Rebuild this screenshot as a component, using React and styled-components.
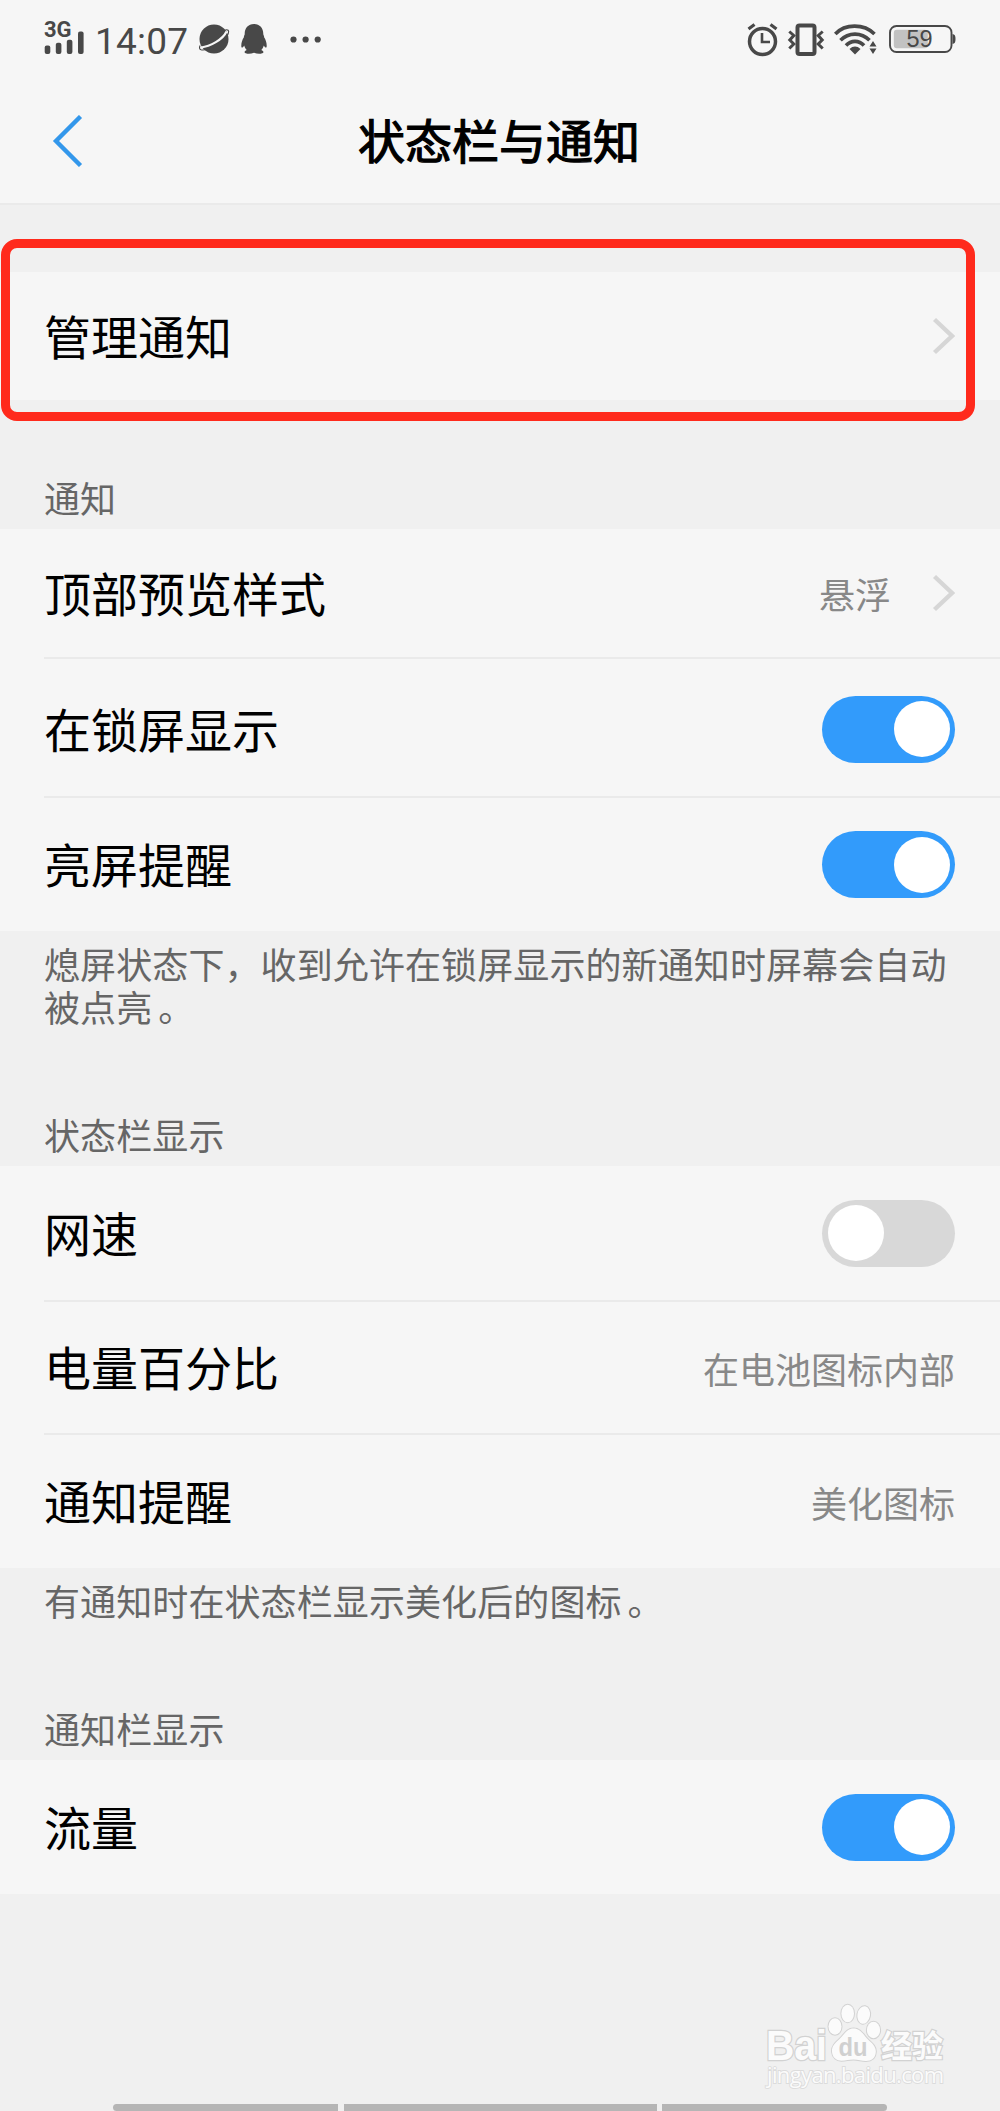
import React, { useState } from 'react';
import styled, { createGlobalStyle, css } from 'styled-components';

const colors = {
  page: '#f0f0f0',
  panel: '#f6f6f6',
  line: '#eaeaea',
  blue: '#329bfb',
  back: '#3397eb',
  off: '#d8d8d8',
  status: '#484848',
  label: '#666666',
  value: '#888888',
  mark: '#ff2a1c',
  nav: '#b5b5b5',
};

const GlobalStyle = createGlobalStyle`
  * {
    box-sizing: border-box;
  }
  body {
    margin: 0;
    background: ${colors.page};
    font-family: 'Noto Sans CJK SC', 'Noto Sans', sans-serif;
  }
`;

const Screen = styled.div`
  position: relative;
  display: flex;
  flex-direction: column;
  width: 1000px;
  height: 2111px;
  overflow: hidden;
  background: ${colors.page};
`;

const Header = styled.header`
  height: 205px;
  background: ${colors.panel};
  border-bottom: 2px solid ${colors.line};
`;

const StatusBar = styled.div`
  display: flex;
  justify-content: space-between;
  height: 78px;
  padding: 0 44px;
`;

const StatusGroup = styled.div`
  display: flex;
  align-items: center;
  height: 78px;
`;

const Network = styled.div`
  display: flex;
  flex-direction: column;
  width: 40px;
  height: 34px;
`;

const NetworkType = styled.span`
  height: 8px;
  font: 700 22px/16px Roboto, sans-serif;
  color: ${colors.status};
`;

const Clock = styled.span`
  width: 103px;
  padding-left: 11px;
  margin-top: 5px;
  font: 400 37px/44px Roboto, sans-serif;
  letter-spacing: 0.2px;
  color: ${colors.status};
`;

const StatusIcon = styled.svg`
  display: block;
  flex: none;
  margin-left: ${({ $gap }) => $gap || 0}px;
  overflow: visible;
`;

const TitleBar = styled.div`
  display: grid;
  grid-template-columns: 120px 1fr 120px;
  align-items: center;
  height: 126px;
`;

const BackButton = styled.button`
  display: flex;
  padding: 0 0 0 52px;
  border: 0;
  background: none;
`;

const Title = styled.h1`
  margin: 0;
  padding: 0 2px 5px 0;
  font-size: 47px;
  font-weight: 400;
  line-height: 60px;
  text-align: center;
  color: #000;
  -webkit-text-stroke: 1.2px #000;
`;

const Panel = styled.section`
  background: ${colors.panel};
`;

const FirstPanel = styled(Panel)`
  margin-top: 67px;
`;

const Row = styled.div`
  display: flex;
  align-items: center;
  height: ${({ $height }) => $height}px;
  margin-left: 44px;
  padding-top: ${({ $shift }) => $shift || 0}px;
  padding-right: 45px;
  ${({ $divided }) => $divided && css`
    border-top: 2px solid ${colors.line};
  `}
`;

const RowLabel = styled.span`
  flex: 1;
  padding-bottom: 3px;
  font-size: 47px;
  line-height: 60px;
  color: #000;
`;

const RowValue = styled.span`
  font-size: 36px;
  line-height: 48px;
  color: ${colors.value};
`;

const Arrow = styled.svg`
  display: block;
  margin-left: 41px;
`;

const Between = styled.div`
  display: flex;
  flex-direction: column;
  height: ${({ $height }) => $height}px;
  padding: 11px 40px 8px 44px;
`;

const Hint = styled.p`
  margin: 0;
  font-size: 36px;
  line-height: 43px;
  letter-spacing: 0.1px;
  color: ${colors.label};
  white-space: pre-line;
`;

const FullStop = styled.span`
  margin-left: 6px;
`;

const GroupLabel = styled.h2`
  margin: auto 0 0;
  font-size: 36px;
  font-weight: 400;
  line-height: 48px;
  letter-spacing: 0.1px;
  color: ${colors.label};
`;

const Switch = styled.button`
  display: flex;
  justify-content: ${({ $on }) => $on ? 'flex-end' : 'flex-start'};
  width: 133px;
  height: 67px;
  padding: 5.5px;
  border: 0;
  border-radius: 34px;
  background: ${({ $on }) => $on ? colors.blue : colors.off};
`;

const Knob = styled.span`
  width: 56px;
  height: 56px;
  border-radius: 50%;
  background: #fff;
`;

const Highlight = styled.div`
  position: absolute;
  top: 239px;
  left: 1px;
  width: 973.5px;
  height: 182px;
  border: 9px solid ${colors.mark};
  border-radius: 16px;
  pointer-events: none;
`;

const Watermark = styled.svg`
  position: absolute;
  right: 49px;
  bottom: 16px;
`;

const NavBar = styled.div`
  display: grid;
  grid-template-columns: 225px 313px 225px;
  gap: 5.5px;
  justify-content: center;
  height: 7px;
  margin-top: auto;
`;

const NavPart = styled.span`
  background: ${colors.nav};
  &:first-child {
    border-radius: 4px 0 0 4px;
  }
  &:last-child {
    border-radius: 0 4px 4px 0;
  }
`;

const groups = [
  {
    label: '通知',
    gap: 129,
    rows: [
      { name: '顶部预览样式', value: '悬浮', arrow: true, height: 128 },
      { name: '在锁屏显示', toggle: true, on: true, height: 139, shift: 3 },
      { name: '亮屏提醒', toggle: true, on: true, height: 135 },
    ],
  },
  {
    hint: '熄屏状态下，收到允许在锁屏显示的新通知时屏幕会自动\n被点亮',
    label: '状态栏显示',
    gap: 235,
    rows: [
      { name: '网速', toggle: true, on: false, height: 134 },
      { name: '电量百分比', value: '在电池图标内部', height: 133 },
      { name: '通知提醒', value: '美化图标', height: 135 },
    ],
  },
  {
    hint: '有通知时在状态栏显示美化后的图标',
    label: '通知栏显示',
    gap: 192,
    rows: [
      { name: '流量', toggle: true, on: true, height: 134 },
    ],
  },
];

const ArrowIcon = () => (
  <Arrow width="23" height="38" viewBox="0 0 23 38" fill="none">
    <path d="M2.5 2.5 20 19 2.5 35.5" stroke="#d6d6d6" strokeWidth="4.4" />
  </Arrow>
);

const Toggle = ({ initial }) => {
  const [on, setOn] = useState(initial);
  return (
    <Switch $on={on} onClick={() => setOn(!on)}>
      <Knob />
    </Switch>
  );
};

const SignalIcon = () => (
  <StatusIcon width="40" height="24" viewBox="0 0 40 24" fill={colors.status}>
    <rect x="0.7" y="15.5" width="5.6" height="8.500" rx="2" />
    <rect x="11.800" y="12.800" width="5.600" height="11.200" rx="2" />
    <rect x="22.800" y="9.800" width="5.600" height="14.200" rx="2" />
    <rect x="34" y="1.500" width="5.600" height="22.500" rx="2" />
  </StatusIcon>
);

const PlanetIcon = () => (
  <StatusIcon $gap={11} width="32" height="32" viewBox="0 0 32 32">
    <circle cx="16" cy="16" r="14.500" fill={colors.status} />
    <path d="M3 24.500C12 23.500 25 16.500 28.500 8.500" fill="none" stroke={colors.panel} strokeWidth="2.200" />
    <path d="M26.500 7.200c3.500-1.200 5 .2 3.700 3.500C27 18.500 9 28.300 3 26.800c-2-.6-1.700-2.600-.9-4.300" fill="none" stroke={colors.status} strokeWidth="1.100" />
  </StatusIcon>
);

const PenguinIcon = () => (
  <StatusIcon $gap={11} width="26" height="30" viewBox="0 0 26 30" fill={colors.status}>
    <path d="M13 0C7 0 3.600 4.300 3.700 10.200c-.2 1-.9 1.500-.8 3C1.300 15.600.200 18.800.300 22c.1 2.300 1.200 2.200 2.900-.6.500 1.700 1.300 3.300 2.500 4.500-1.500.6-2.300 1.400-2.100 2.400.2 1.700 5.800 2.100 9.400.5 3.600 1.600 9.200 1.200 9.400-.5.200-1-.6-1.800-2.100-2.400 1.200-1.200 2-2.800 2.500-4.500 1.700 2.800 2.800 2.900 2.900.6.100-3.200-1-6.400-2.600-8.800.1-1.500-.6-2-.8-3C22.400 4.300 19 0 13 0Z" />
  </StatusIcon>
);

const MoreIcon = () => (
  <StatusIcon $gap={23} width="32" height="8" viewBox="0 0 32 8" fill={colors.status}>
    <circle cx="3.500" cy="4.500" r="3.100" />
    <circle cx="15.600" cy="4.500" r="3.100" />
    <circle cx="27.700" cy="4.500" r="3.100" />
  </StatusIcon>
);

const AlarmIcon = () => (
  <StatusIcon width="31" height="33" viewBox="0 0 31 33" fill="none" stroke={colors.status}>
    <circle cx="15.500" cy="18.500" r="13" strokeWidth="3.500" />
    <path d="M15 10v9h8" strokeWidth="2.600" />
    <path d="m1.500 6 6-4.500M23.500 1.500l6 4.500" strokeWidth="3.200" />
  </StatusIcon>
);

const VibrateIcon = () => (
  <StatusIcon $gap={10} width="36" height="33" viewBox="0 0 36 33" fill="none" stroke={colors.status}>
    <rect x="9.500" y="2.500" width="17" height="28.500" rx="2" strokeWidth="4" />
    <path d="m1.300 8.500 4.500 4-4 4.500 4 4-4.500 4.500M34.700 8.500l-4.500 4 4 4.500-4 4 4.500 4.500" strokeWidth="3" />
  </StatusIcon>
);

const WifiIcon = () => (
  <StatusIcon $gap={10} width="43" height="32" viewBox="0 0 43 32" fill="none" stroke={colors.status}>
    <path d="M1.300 11C11 .500 30 .500 40.500 11" strokeWidth="3.600" />
    <path d="M6.500 17.300c8-8.300 21-8.300 29 0" strokeWidth="3.600" />
    <path d="M12 22.500c5-5.500 13-5.500 18 0" strokeWidth="3.600" />
    <path d="M15.500 26c3.500-3.300 7.500-3.300 11 0L21 31.500Z" fill={colors.status} stroke="none" />
    <path d="m39 18 3.500 5.500h-7ZM39 31l3.500-5.500h-7Z" fill={colors.status} stroke="none" />
  </StatusIcon>
);

const BatteryIcon = () => (
  <StatusIcon $gap={12} width="67" height="28" viewBox="0 0 67 28">
    <rect x="1" y="1" width="61.500" height="26" rx="6.500" fill="none" stroke={colors.status} strokeWidth="1.900" />
    <rect x="4.800" y="4.800" width="34" height="18.400" rx="3" fill="#c2c2c2" />
    <path d="M63.500 9c2.200.3 3 1.600 3 5s-.8 4.700-3 5Z" fill={colors.status} />
    <text x="30.500" y="22.300" fontFamily="'Liberation Sans', sans-serif" fontSize="23.500" textAnchor="middle" fill={colors.status}>59</text>
  </StatusIcon>
);

const BaiduMark = () => (
  <Watermark width="190" height="94" viewBox="0 0 190 94" fill="#fbfbfb" stroke="#d2d2d2" strokeWidth="2.600" paintOrder="stroke">
    <text x="5" y="58.500" fontFamily="'Liberation Sans', sans-serif" fontWeight="700" fontSize="42" textLength="61" lengthAdjust="spacingAndGlyphs">Bai</text>
    <ellipse cx="74" cy="25.500" rx="6.500" ry="8.300" strokeWidth="2" />
    <ellipse cx="86.700" cy="12.500" rx="6.300" ry="8.800" strokeWidth="2" />
    <ellipse cx="102.700" cy="14" rx="6.300" ry="8.800" transform="rotate(10 102.700 14)" strokeWidth="2" />
    <ellipse cx="112.500" cy="29" rx="6.600" ry="8.300" strokeWidth="2" />
    <path d="M92.500 27.500c-7 0-9.500 6.500-14 10.500-4.500 4-8 7.500-7.500 13 .6 6 4.800 8.700 9.500 8.700 4.500 0 7.500-1.200 12-1.200s8 1.500 12.500 1.500c5.500 0 9.500-3 9.800-9 .3-5.500-3.500-8.500-7.800-12.500-4.500-4.300-7-11-14.500-11Z" strokeWidth="2" />
    <text x="77.500" y="55" fontFamily="'Liberation Sans', sans-serif" fontWeight="700" fontSize="25" textLength="29" lengthAdjust="spacingAndGlyphs" fill="#d0d0d0" stroke="none">du</text>
    <text x="120" y="55.500" fontFamily="'Noto Sans CJK SC', sans-serif" fontWeight="700" fontSize="31" strokeWidth="2.400">经验</text>
    <text x="6" y="81.500" fontFamily="'Open Sans', sans-serif" fontSize="22" textLength="177" strokeWidth="1.800" stroke="#dcdcdc">jingyan.baidu.com</text>
  </Watermark>
);

const App = () => (
  <>
    <GlobalStyle />
    <Screen>
      <Header>
        <StatusBar>
          <StatusGroup>
            <Network>
              <NetworkType>3G</NetworkType>
              <SignalIcon />
            </Network>
            <Clock>14:07</Clock>
            <PlanetIcon />
            <PenguinIcon />
            <MoreIcon />
          </StatusGroup>
          <StatusGroup>
            <AlarmIcon />
            <VibrateIcon />
            <WifiIcon />
            <BatteryIcon />
          </StatusGroup>
        </StatusBar>
        <TitleBar>
          <BackButton aria-label="返回">
            <svg width="31" height="52" viewBox="0 0 31 52" fill="none">
              <path d="M28.500 1.500 4 26l24.500 24.500" stroke={colors.back} strokeWidth="4.400" />
            </svg>
          </BackButton>
          <Title>状态栏与通知</Title>
        </TitleBar>
      </Header>
      <FirstPanel>
        <Row $height={128}>
          <RowLabel>管理通知</RowLabel>
          <ArrowIcon />
        </Row>
      </FirstPanel>
      {groups.map(group => (
        <React.Fragment key={group.label}>
          <Between $height={group.gap}>
            {group.hint && <Hint>{group.hint}<FullStop>。</FullStop></Hint>}
            <GroupLabel>{group.label}</GroupLabel>
          </Between>
          <Panel>
            {group.rows.map((row, index) => (
              <Row key={row.name} $height={row.height} $shift={row.shift} $divided={index > 0}>
                <RowLabel>{row.name}</RowLabel>
                {row.value && <RowValue>{row.value}</RowValue>}
                {row.arrow && <ArrowIcon />}
                {row.toggle && <Toggle initial={row.on} />}
              </Row>
            ))}
          </Panel>
        </React.Fragment>
      ))}
      <NavBar>
        <NavPart />
        <NavPart />
        <NavPart />
      </NavBar>
      <Highlight />
      <BaiduMark />
    </Screen>
  </>
);

export default App;
